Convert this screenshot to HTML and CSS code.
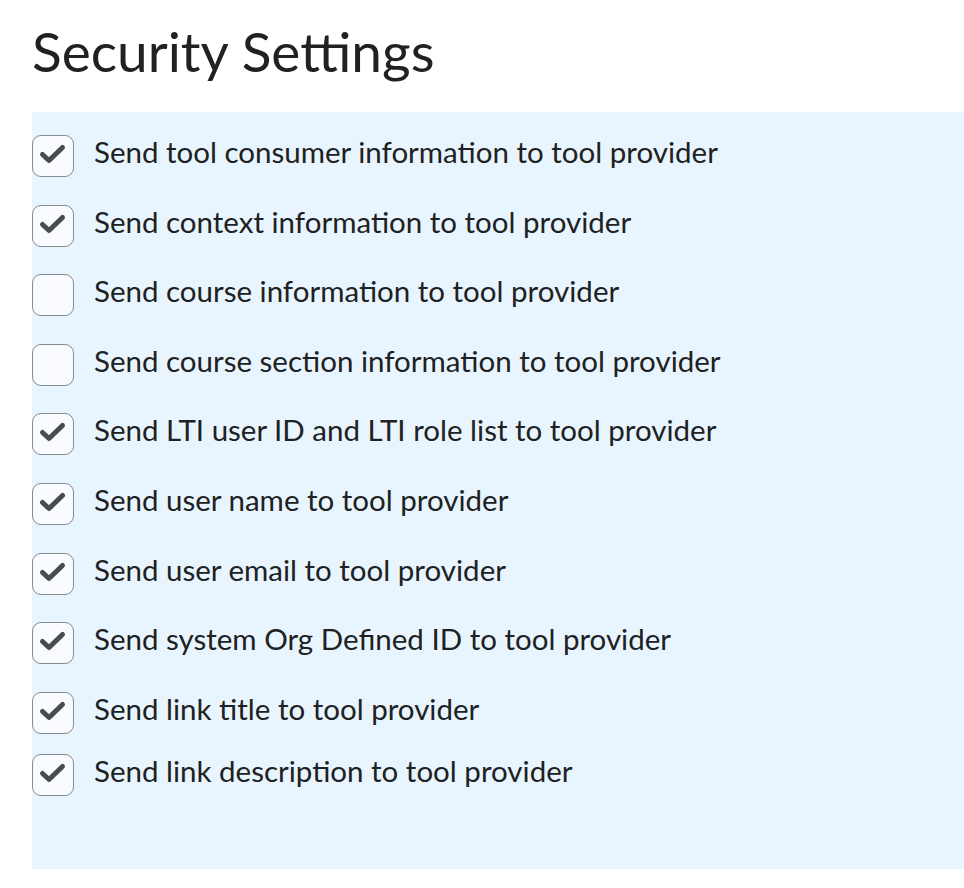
FILE: index.html
```html
<!DOCTYPE html>
<html lang="en">
<head>
  <meta charset="UTF-8" />
  <title>Security Settings</title>
  <link rel="stylesheet" href="styles.css">
</head>
<body>

  <h1 class="page-title">Security Settings</h1>

  <div class="settings-panel">
    <label class="option"><input type="checkbox" checked /><span class="box"></span><span class="label-text">Send tool consumer information to tool provider</span></label>
    <label class="option"><input type="checkbox" checked /><span class="box"></span><span class="label-text">Send context information to tool provider</span></label>
    <label class="option"><input type="checkbox" /><span class="box"></span><span class="label-text">Send course information to tool provider</span></label>
    <label class="option"><input type="checkbox" /><span class="box"></span><span class="label-text">Send course section information to tool provider</span></label>
    <label class="option"><input type="checkbox" checked /><span class="box"></span><span class="label-text">Send LTI user ID and LTI role list to tool provider</span></label>
    <label class="option"><input type="checkbox" checked /><span class="box"></span><span class="label-text">Send user name to tool provider</span></label>
    <label class="option"><input type="checkbox" checked /><span class="box"></span><span class="label-text">Send user email to tool provider</span></label>
    <label class="option"><input type="checkbox" checked /><span class="box"></span><span class="label-text">Send system Org Defined ID to tool provider</span></label>
    <label class="option"><input type="checkbox" checked /><span class="box"></span><span class="label-text">Send link title to tool provider</span></label>
    <label class="option last"><input type="checkbox" checked /><span class="box"></span><span class="label-text">Send link description to tool provider</span></label>
  </div>

</body>
</html>
```

FILE: styles.css
```css
  body {
    margin: 0;
    padding: 0 0 0 32px;
    font-family: Lato, "Open Sans", sans-serif;
    color: #202122;
    background: #ffffff;
  }

  .page-title {
    margin: 0;
    padding-top: 19px;
    height: 112px;
    box-sizing: border-box;
    font-size: 55px;
    font-weight: 400;
    line-height: 64px;
    color: #202122;
  }

  .settings-panel {
    background-color: #e8f5fe;
    padding: 23px 0 73px 0;
    display: flex;
    flex-direction: column;
    gap: 27.6px;
  }

  .option {
    display: flex;
    align-items: flex-start;
    gap: 20px;
    font-size: 29.5px;
    cursor: pointer;
  }

  .option.last {
    margin-top: -7px;
  }

  .option input {
    display: none;
  }

  .label-text {
    line-height: 34px;
  }

  .box {
    flex: none;
    width: 42px;
    height: 42px;
    box-sizing: border-box;
    border: 1px solid #868c91;
    border-radius: 9px;
    background-color: #f9fbff;
  }

  .option input:checked + .box {
    background-image: url("data:image/svg+xml,%3Csvg xmlns='http://www.w3.org/2000/svg' width='42' height='42' viewBox='0 0 42 42'%3E%3Cpath d='M10.5 19.5L17 25.5L30.5 12.5' fill='none' stroke='%23494c4e' stroke-width='5' stroke-linecap='round' stroke-linejoin='round'/%3E%3C/svg%3E");
    background-repeat: no-repeat;
    background-position: -1px -1px;
  }
```
